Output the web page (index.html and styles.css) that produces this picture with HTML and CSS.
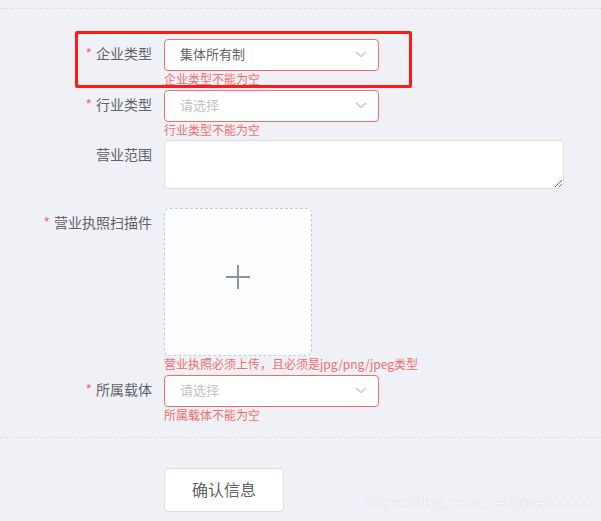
FILE: index.html
```html
<!DOCTYPE html>
<html lang="zh-CN">
<head>
<meta charset="utf-8">
<title>表单</title>
<link rel="stylesheet" href="styles.css">
</head>
<body>
<div class="page">
  <div class="divider"></div>
  <form class="form">
    <div class="item item-1">
      <label class="label"><span class="req">*</span>企业类型</label>
      <div class="control">
        <div class="select is-error">
          <span class="value">集体所有制</span>
          <svg class="arrow" width="12" height="7" viewBox="0 0 12 7"><path d="M1 1 L6 5.5 L11 1" fill="none" stroke="#c0c4cc" stroke-width="1.2"/></svg>
        </div>
        <div class="error">企业类型不能为空</div>
      </div>
    </div>
    <div class="item item-2">
      <label class="label"><span class="req">*</span>行业类型</label>
      <div class="control">
        <div class="select is-error">
          <span class="placeholder">请选择</span>
          <svg class="arrow" width="12" height="7" viewBox="0 0 12 7"><path d="M1 1 L6 5.5 L11 1" fill="none" stroke="#c0c4cc" stroke-width="1.2"/></svg>
        </div>
        <div class="error">行业类型不能为空</div>
      </div>
    </div>
    <div class="item item-3">
      <label class="label">营业范围</label>
      <div class="control">
        <textarea class="textarea"></textarea>
      </div>
    </div>
    <div class="item item-4">
      <label class="label"><span class="req">*</span>营业执照扫描件</label>
      <div class="control">
        <div class="upload">
          <svg class="plus" width="24" height="24" viewBox="0 0 24 24"><rect x="0" y="11" width="24" height="2" fill="#8c939d"/><rect x="11" y="0" width="2" height="24" fill="#8c939d"/></svg>
        </div>
        <div class="error">营业执照必须上传，且必须是jpg/png/jpeg类型</div>
      </div>
    </div>
    <div class="item item-5">
      <label class="label"><span class="req">*</span>所属载体</label>
      <div class="control">
        <div class="select is-error">
          <span class="placeholder">请选择</span>
          <svg class="arrow" width="12" height="7" viewBox="0 0 12 7"><path d="M1 1 L6 5.5 L11 1" fill="none" stroke="#c0c4cc" stroke-width="1.2"/></svg>
        </div>
        <div class="error">所属载体不能为空</div>
      </div>
    </div>
  </form>
  <div class="divider divider-bottom"></div>
  <div class="actions">
    <button type="button" class="btn">确认信息</button>
  </div>
  <div class="highlight"></div>
  <div class="watermark">https://blog.csdn.net/janessssss</div>
</div>
</body>
</html>
```
FILE: styles.css
```css
html, body {
  margin: 0;
  padding: 0;
  background: #f0f1f6;
}
body {
  font-family: "Noto Sans CJK SC", "Noto Sans", sans-serif;
  color: #606266;
}
.page {
  position: relative;
  width: 601px;
  height: 521px;
  overflow: hidden;
}
.divider {
  margin-top: 8px;
  border-top: 1px dashed #dcdfe6;
}
.divider-bottom {
  margin-top: 30px;
}
.form {
  padding-top: 30px;
  margin: 0;
}
.item {
  display: grid;
  grid-template-columns: 164px 1fr;
  position: relative;
}
.item-1 { margin-bottom: 19px; }
.item-2 { margin-bottom: 18px; }
.item-3 { margin-bottom: 19px; }
.item-4 { margin-bottom: 19px; }
.item-5 { margin-bottom: 0; }
.label {
  box-sizing: border-box;
  padding-right: 12px;
  text-align: right;
  font-size: 14px;
  line-height: 28px;
  height: 32px;
  color: #606266;
  white-space: nowrap;
}
.req {
  color: #f56c6c;
  margin-right: 4px;
}
.control {
  position: relative;
}
.select {
  box-sizing: border-box;
  width: 215px;
  height: 32px;
  background: #fff;
  border: 1px solid #dcdfe6;
  border-radius: 4px;
  display: flex;
  align-items: center;
  justify-content: space-between;
  padding: 0 11px 3px 15px;
  font-size: 13px;
}
.select.is-error {
  border-color: #f56c6c;
}
.value { color: #606266; }
.placeholder { color: #c0c4cc; }
.arrow { display: block; margin-top: 2px; }
.error {
  position: absolute;
  left: 0;
  top: 100%;
  padding-top: 2px;
  font-size: 12px;
  line-height: 1;
  color: #f56c6c;
  white-space: nowrap;
}
.textarea {
  display: block;
  box-sizing: border-box;
  width: 400px;
  height: 49px;
  background: #fff;
  border: 1px solid #dcdfe6;
  border-radius: 4px;
  padding: 5px 15px;
  margin: 0;
  resize: vertical;
  font-family: inherit;
  font-size: 13px;
  outline: none;
}
.upload {
  box-sizing: border-box;
  width: 148px;
  height: 148px;
  background: #fbfdff;
  border: 1px dashed #c0ccda;
  border-radius: 6px;
  display: flex;
  align-items: center;
  justify-content: center;
}
.plus {
  display: block;
  margin-bottom: 10px;
}
.actions {
  padding: 30px 0 0 164px;
}
.btn {
  box-sizing: border-box;
  width: 120px;
  height: 44px;
  background: #fff;
  border: 1px solid #dcdfe6;
  border-radius: 4px;
  color: #606266;
  font-family: inherit;
  font-size: 16px;
  padding: 0 0 2px;
  cursor: pointer;
}
.highlight {
  position: absolute;
  left: 75px;
  top: 31px;
  width: 337px;
  height: 57px;
  box-sizing: border-box;
  border: 3px solid #ff1a1a;
  border-radius: 2px;
  pointer-events: none;
}
.watermark {
  position: absolute;
  right: 9px;
  top: 494px;
  font-family: "Liberation Sans", Arial, sans-serif;
  font-size: 16px;
  line-height: 18px;
  color: rgba(255, 255, 255, 0.9);
  text-shadow: 0 0 1px rgba(0, 0, 0, 0.2);
  white-space: nowrap;
}
```
